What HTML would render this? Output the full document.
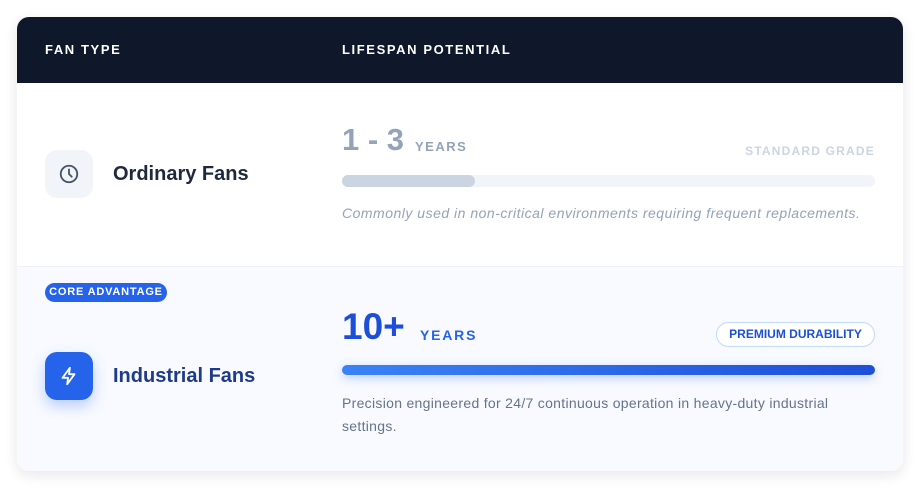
<!DOCTYPE html>
<html><head><style>
*{box-sizing:border-box;margin:0;padding:0}
body{width:920px;height:489px;background:#fff;font-family:"Liberation Sans",sans-serif;position:relative;overflow:hidden}
.card{position:absolute;left:17px;top:17px;width:886px;height:454px;border-radius:12px;overflow:hidden;box-shadow:0 4px 14px rgba(15,23,42,.10);background:#fff}
.hdr{position:absolute;left:0;top:0;width:886px;height:66px;background:#0f172a;color:#fff;font-weight:700;font-size:13px;letter-spacing:1.6px}
.hdr span{position:absolute;top:25px}
.r2{position:absolute;left:0;top:249px;width:886px;height:205px;background:#f8faff;border-top:1px solid #edf1f7}
.abs{position:absolute}
.ib{width:48px;height:48px;border-radius:12px;display:flex;align-items:center;justify-content:center}
</style></head><body>
<div class="card">
 <div class="hdr"><span style="left:28px">FAN TYPE</span><span style="left:325px">LIFESPAN POTENTIAL</span></div>
 <div class="abs ib" style="left:28px;top:133px;background:#f1f5f9">
  <svg width="22" height="22" viewBox="0 0 24 24" fill="none" stroke="#475569" stroke-width="2" stroke-linecap="round"><circle cx="12" cy="12" r="9"/><path d="M12 7v5l3 3"/></svg>
 </div>
 <div class="abs" style="left:96px;top:146px;font-size:20px;font-weight:700;color:#1e293b">Ordinary Fans</div>
 <div class="abs" style="left:325px;top:105px;font-size:31px;font-weight:700;color:#94a3b8">1 - 3</div>
 <div class="abs" style="left:398px;top:122px;font-size:13px;font-weight:700;color:#94a3b8;letter-spacing:1.5px">YEARS</div>
 <div class="abs" style="right:28px;top:127px;font-size:12px;font-weight:700;color:#cbd5e1;letter-spacing:1.2px">STANDARD GRADE</div>
 <div class="abs" style="left:325px;top:158px;width:533px;height:12px;border-radius:6px;background:#f1f5f9"><div style="width:133px;height:12px;border-radius:6px;background:#cbd5e1"></div></div>
 <div class="abs" style="left:325px;top:188px;font-size:14px;font-style:italic;color:#94a3b8;letter-spacing:.5px">Commonly used in non-critical environments requiring frequent replacements.</div>
 <div class="r2">
  <div class="abs" style="left:28px;top:16px;height:19px;width:122px;border-radius:10px;background:#2563eb;color:#fff;font-size:11px;font-weight:700;letter-spacing:.8px;text-align:center;line-height:19px">CORE ADVANTAGE</div>
  <div class="abs ib" style="left:28px;top:85px;background:#2563eb;box-shadow:0 6px 14px rgba(37,99,235,.3)">
   <svg width="22" height="22" viewBox="0 0 24 24" fill="none" stroke="#fff" stroke-width="2" stroke-linejoin="round"><path d="M13 3L5 14h6l-1 7 8-11h-6z"/></svg>
  </div>
  <div class="abs" style="left:96px;top:98px;font-size:20px;font-weight:700;color:#1e3a8a">Industrial Fans</div>
  <div class="abs" style="left:325px;top:39px;font-size:37px;font-weight:700;color:#1d4ed8">10+</div>
  <div class="abs" style="left:403px;top:60px;font-size:14px;font-weight:700;color:#2563eb;letter-spacing:1.8px">YEARS</div>
  <div class="abs" style="right:28px;top:55px;width:159px;height:25px;border:1px solid #bfdbfe;border-radius:13px;background:#fff;font-size:12px;font-weight:700;color:#1d4ed8;text-align:center;line-height:23px">PREMIUM DURABILITY</div>
  <div class="abs" style="left:325px;top:98px;width:533px;height:10px;border-radius:5px;background:linear-gradient(90deg,#3b82f6,#1d4ed8);box-shadow:0 3px 10px rgba(37,99,235,.3)"></div>
  <div class="abs" style="left:325px;top:125px;width:515px;font-size:14px;line-height:23px;color:#64748b;letter-spacing:.3px">Precision engineered for 24/7 continuous operation in heavy-duty industrial settings.</div>
 </div>
</div>
</body></html>
